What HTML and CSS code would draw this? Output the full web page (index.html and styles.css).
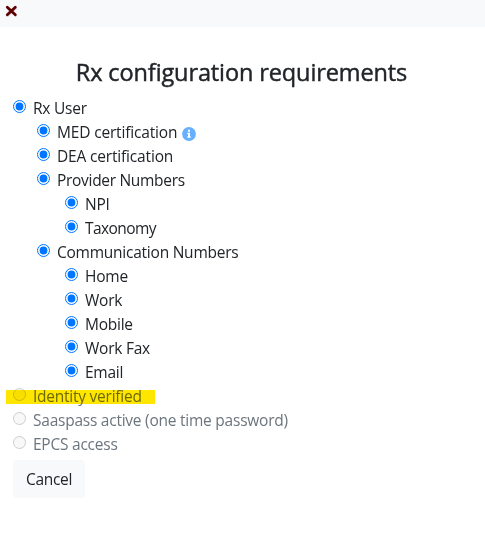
FILE: index.html
```html
<!DOCTYPE html>
<html lang="en">
<head>
<meta charset="utf-8">
<title>Rx configuration requirements</title>
<link rel="stylesheet" href="styles.css">
</head>
<body>
<header class="bar">
  <svg class="close" viewBox="0 0 13 13" role="img" aria-label="Close"><path class="close-shadow" d="M3 3.2 10.8 10.4M10.8 3.2 3 10.4"/><path d="M2.3 2.3 10.3 9.7M10.3 2.3 2.3 9.7"/></svg>
</header>
<main class="content">
  <h1 class="title">Rx configuration requirements</h1>
  <div class="list">
    <label class="row"><input type="radio" checked><span>Rx User</span></label>
    <label class="row level-1"><input type="radio" checked><span class="certification">MED certification</span>
      <svg class="info" viewBox="0 0 14 14"><circle cx="7" cy="7" r="6.9"/><path d="M6 2.8h2v2H6zM5.2 5.8H8v3.7h.8v1.3H5.2V9.5H6V7.1h-.8z"/></svg></label>
    <label class="row level-1"><input type="radio" checked><span class="certification">DEA certification</span></label>
    <label class="row level-1"><input type="radio" checked><span class="numbers">Provider Numbers</span></label>
    <label class="row level-2"><input type="radio" checked><span>NPI</span></label>
    <label class="row level-2"><input type="radio" checked><span class="taxonomy">Taxonomy</span></label>
    <label class="row level-1"><input type="radio" checked><span>Communication Numbers</span></label>
    <label class="row level-2"><input type="radio" checked><span>Home</span></label>
    <label class="row level-2"><input type="radio" checked><span>Work</span></label>
    <label class="row level-2"><input type="radio" checked><span>Mobile</span></label>
    <label class="row level-2"><input type="radio" checked><span>Work Fax</span></label>
    <label class="row level-2"><input type="radio" checked><span>Email</span></label>
    <label class="row disabled marked"><input type="radio" disabled><span>Identity verified</span></label>
    <label class="row disabled"><input type="radio" disabled><span>Saaspass active (one time password)</span></label>
    <label class="row disabled"><input type="radio" disabled><span>EPCS access</span></label>
  </div>
  <button class="cancel" type="button">Cancel</button>
</main>
</body>
</html>
```
FILE: styles.css
```css
* { box-sizing: border-box; }
body {
  margin: 0;
  background: #fff;
  color: #212529;
  font: 15.5px/24px "Segoe UI", "Open Sans", "Noto Sans", sans-serif;
  letter-spacing: -0.24px;
}
.bar { height: 27px; padding: 5px; background: #f8f9fa; }
.close { display: block; width: 13px; height: 13px; fill: none; stroke: #600000; stroke-width: 2.8; stroke-linecap: round; }
.close-shadow { stroke: #dcdfe8; }
.content { padding: 31px 13px 0; }
.title {
  margin: 0 0 9px;
  padding-right: 2px;
  font-size: 23.5px;
  font-weight: 500;
  line-height: 29px;
  letter-spacing: -0.11px;
  -webkit-text-stroke: 0.45px #212529;
  text-align: center;
  white-space: nowrap;
}
.row { display: flex; height: 24px; white-space: nowrap; }
.row input { width: 13px; height: 13px; margin: 4px 7px 0 0; flex: none; }
.level-1 { padding-left: 24px; }
.level-2 { padding-left: 52px; }
.certification { letter-spacing: -0.17px; }
.numbers { letter-spacing: -0.3px; }
.taxonomy { letter-spacing: -0.58px; }
.disabled { color: #6c757d; }
.info { width: 14px; height: 14px; margin: 7px 0 0 5px; fill: #fff; }
.info circle { fill: #66b0ff; }
.marked { position: relative; }
.marked::after {
  content: "";
  position: absolute;
  left: -7px;
  top: 6px;
  width: 149px;
  height: 14px;
  background: #ffe600;
  mix-blend-mode: multiply;
}
.cancel {
  display: block;
  width: 72px;
  height: 38px;
  margin-top: 4px;
  padding: 0;
  border: 0;
  border-radius: 4px;
  background: #f8f9fa;
  color: #212529;
  font: inherit;
  letter-spacing: -0.3px;
}
```
